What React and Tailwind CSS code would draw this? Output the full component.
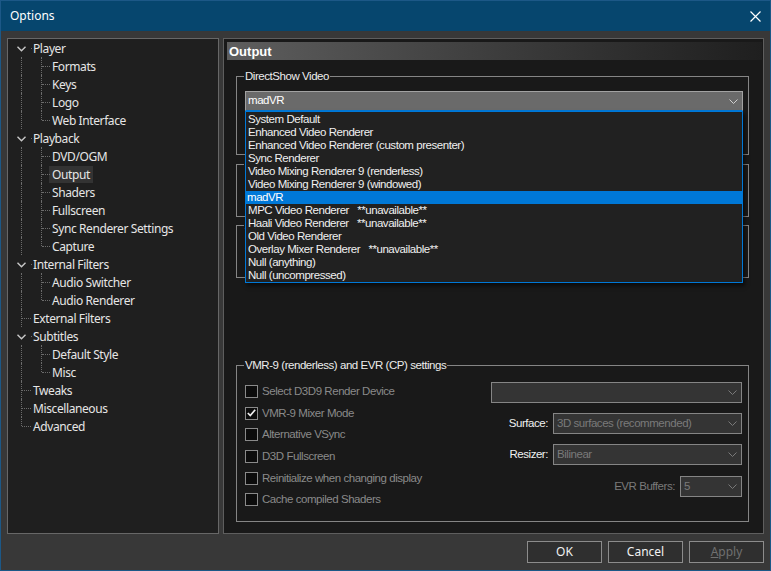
import React from 'react';

// Windows-dialog-like font stacks
const ui = "font-['Noto_Sans',sans-serif] text-[12px]";
const dlg = "font-['Liberation_Sans',Arial,sans-serif] text-[11.5px] tracking-[-0.45px]";

const treeItems = [
  { t: 'Player', l: 1, c: true },
  { t: 'Formats', l: 2 },
  { t: 'Keys', l: 2 },
  { t: 'Logo', l: 2 },
  { t: 'Web Interface', l: 2, last: true },
  { t: 'Playback', l: 1, c: true },
  { t: 'DVD/OGM', l: 2 },
  { t: 'Output', l: 2, sel: true },
  { t: 'Shaders', l: 2 },
  { t: 'Fullscreen', l: 2 },
  { t: 'Sync Renderer Settings', l: 2 },
  { t: 'Capture', l: 2, last: true },
  { t: 'Internal Filters', l: 1, c: true },
  { t: 'Audio Switcher', l: 2 },
  { t: 'Audio Renderer', l: 2, last: true },
  { t: 'External Filters', l: 1 },
  { t: 'Subtitles', l: 1, c: true },
  { t: 'Default Style', l: 2 },
  { t: 'Misc', l: 2, last: true },
  { t: 'Tweaks', l: 1 },
  { t: 'Miscellaneous', l: 1 },
  { t: 'Advanced', l: 1, lastRoot: true },
];

const renderers = [
  'System Default',
  'Enhanced Video Renderer',
  'Enhanced Video Renderer (custom presenter)',
  'Sync Renderer',
  'Video Mixing Renderer 9 (renderless)',
  'Video Mixing Renderer 9 (windowed)',
  'madVR',
  'MPC Video Renderer   **unavailable**',
  'Haali Video Renderer   **unavailable**',
  'Old Video Renderer',
  'Overlay Mixer Renderer   **unavailable**',
  'Null (anything)',
  'Null (uncompressed)',
];

const Chevron = ({ className = 'stroke-[#8a8a8a]' }) => (
  <svg width="9" height="5" viewBox="0 0 9 5" className={className} fill="none">
    <polyline points="0.5,0.5 4.5,4.5 8.5,0.5" strokeWidth="1" />
  </svg>
);

const TreeRow = ({ item }) => {
  const { t, l, c, last, lastRoot, sel } = item;
  return (
    <div className="relative h-[18px] flex items-center">
      {/* connector lines */}
      {l === 1 && !c && (
        <>
          <span className={`absolute left-[13px] top-0 border-l border-dotted border-[#6b6b6b] ${lastRoot ? 'h-[9px]' : 'h-[18px]'}`} />
          <span className="absolute left-[14px] top-[9px] w-[9px] border-t border-dotted border-[#6b6b6b]" />
        </>
      )}
      {l === 1 && c && (
        <>
          <span className="absolute left-[23px] top-[9px] w-[1px] h-[1px] bg-[#6b6b6b]" />
          <span className="absolute left-[9px] top-[7px]">
            <svg width="9" height="6" viewBox="0 0 9 6" fill="none" className="stroke-[#c8c8c8]">
              <polyline points="0.5,0.8 4.5,4.8 8.5,0.8" strokeWidth="1.4" />
            </svg>
          </span>
        </>
      )}
      {l === 2 && (
        <>
          <span className="absolute left-[13px] top-0 h-[18px] border-l border-dotted border-[#6b6b6b]" />
          <span className={`absolute left-[33px] top-0 border-l border-dotted border-[#6b6b6b] ${last ? 'h-[9px]' : 'h-[18px]'}`} />
          <span className="absolute left-[34px] top-[9px] w-[8px] border-t border-dotted border-[#6b6b6b]" />
        </>
      )}
      <span
        className={`${l === 1 ? 'ml-[22px]' : 'ml-[41px]'} ${sel ? 'bg-[#333333]' : ''} px-[3px] h-[17px] leading-[17px] tracking-[-0.4px] text-[#e6e6e6] whitespace-nowrap`}
      >
        {t}
      </span>
    </div>
  );
};

// fieldset carries no padding so the legend sits 7px in from the border
const GroupBox = ({ label, className = '', inner = '', children }) => (
  <fieldset className={`border border-[#858585] p-0 ${className}`}>
    <legend className={`${dlg} ml-[7px] px-[1px] leading-[13px] text-[#ececec]`}>{label}</legend>
    <div className={inner}>{children}</div>
  </fieldset>
);

const Check = ({ label, checked }) => (
  <div className="h-[21.6px] flex items-center">
    <span className="w-[13px] h-[13px] border border-[#8a8a8a] bg-[#0c0c0c] flex items-center justify-center">
      {checked && (
        <svg width="9" height="8" viewBox="0 0 9 8" fill="none" className="stroke-[#f0f0f0]">
          <polyline points="0.8,4 3.3,6.6 8.2,0.8" strokeWidth="1.7" />
        </svg>
      )}
    </span>
    <span className={`${dlg} ml-[4px] text-[#8a8a8a] whitespace-nowrap`}>{label}</span>
  </div>
);

const DisabledCombo = ({ value, className = '' }) => (
  <div className={`h-[21px] border border-[#858585] bg-[#343434] flex items-center justify-between pl-[3px] pr-[4px] ${className}`}>
    <span className={`${dlg} text-[#7a7a7a] whitespace-nowrap`}>{value}</span>
    <Chevron className="stroke-[#7a7a7a]" />
  </div>
);

const Button = ({ children, disabled }) => (
  <button
    className={`${ui} w-[75px] h-[22px] border border-[#8c8c8c] bg-[#2f2f2f] ${disabled ? 'text-[#707070]' : 'text-[#f2f2f2]'}`}
  >
    {children}
  </button>
);

export default function App() {
  return (
    <div className="w-[771px] h-[571px] bg-[#383838] border border-[#1c5887] flex flex-col overflow-hidden">
      {/* Title bar */}
      <div className="h-[30px] bg-[#06466e] flex items-center justify-between pl-[9px] pr-[9px] shrink-0">
        <span className={`${ui} text-white`}>Options</span>
        <svg width="11" height="11" viewBox="0 0 11 11" className="stroke-white">
          <path d="M0.5 0.5 L10.5 10.5 M10.5 0.5 L0.5 10.5" strokeWidth="1.2" />
        </svg>
      </div>

      {/* Body */}
      <div className="flex gap-[4px] pl-[6px] pt-[7px] shrink-0">
        {/* Tree */}
        <div className={`${ui} w-[212px] h-[496px] border border-[#676767] bg-[#1f1f1f] overflow-hidden`}>
          {treeItems.map((item) => (
            <TreeRow key={item.t} item={item} />
          ))}
        </div>

        {/* Page */}
        <div className="w-[541px] h-[496px] border border-[#5e5e5e] bg-[#191919] flex flex-col">
          <div className="mt-[3px] ml-[3px] mr-[1px] h-[18px] bg-linear-to-r from-[#5e5e5e] to-[#1f1f1f] flex items-center pl-[2px]">
            <span className="font-['Liberation_Sans',Arial,sans-serif] text-[13px] font-bold text-white leading-none">Output</span>
          </div>

          <GroupBox label="DirectShow Video" className="mt-[10px] ml-[12px] mr-[14px]" inner="pt-[8px] pl-[8px] pr-[5px] pb-[43px]">
            <div className="relative">
              <div className="h-[20px] bg-[#6a6a6a] border border-[#a2a2a2] border-b-[#0078d7] flex items-center justify-between pl-[2px] pr-[4px]">
                <span className={`${dlg} text-white`}>madVR</span>
                <Chevron className="stroke-[#d0d0d0]" />
              </div>
              {/* open dropdown list */}
              <div className="absolute left-0 right-0 top-[20px] z-10 border border-[#0078d7] bg-[#212121] pt-[1px] shadow-[2px_3px_4px_rgba(0,0,0,0.55)]">
                {renderers.map((r) => (
                  <div
                    key={r}
                    className={`${dlg} h-[13px] leading-[13px] whitespace-pre ${r === 'madVR' ? 'bg-[#0078d7] text-white pl-[1px]' : 'text-[#f0f0f0] pl-[2px]'}`}
                  >
                    {r}
                  </div>
                ))}
              </div>
            </div>
          </GroupBox>

          <GroupBox label="Subtitles" className="mt-[3px] ml-[12px] mr-[14px]" inner="h-[45px]" />
          <GroupBox label="Audio Renderer" className="mt-[2px] ml-[12px] mr-[14px]" inner="h-[45px]" />

          <GroupBox
            label="VMR-9 (renderless) and EVR (CP) settings"
            className="mt-[81px] ml-[12px] mr-[14px]"
            inner="pl-[8px] pr-[6px] pb-[10px]"
          >
            <div className="flex">
              <div className="flex-1 pt-[9px]">
                <Check label="Select D3D9 Render Device" />
                <Check label="VMR-9 Mixer Mode" checked />
                <Check label="Alternative VSync" />
                <Check label="D3D Fullscreen" />
                <Check label="Reinitialize when changing display" />
                <Check label="Cache compiled Shaders" />
              </div>
              <div className="w-[251px] pt-[10px] flex flex-col">
                <DisabledCombo value="" />
                <div className="mt-[10px] flex items-center justify-end gap-[5px]">
                  <span className={`${dlg} text-[#f0f0f0]`}>Surface:</span>
                  <DisabledCombo value="3D surfaces (recommended)" className="w-[189px]" />
                </div>
                <div className="mt-[10px] flex items-center justify-end gap-[5px]">
                  <span className={`${dlg} text-[#f0f0f0]`}>Resizer:</span>
                  <DisabledCombo value="Bilinear" className="w-[189px]" />
                </div>
                <div className="mt-[11px] flex items-center justify-end gap-[5px]">
                  <span className={`${dlg} text-[#7a7a7a]`}>EVR Buffers:</span>
                  <DisabledCombo value="5" className="w-[62px]" />
                </div>
              </div>
            </div>
          </GroupBox>
        </div>
      </div>

      {/* Footer buttons */}
      <div className="flex justify-end gap-[6px] pr-[6px] pt-[7px]">
        <Button>OK</Button>
        <Button>Cancel</Button>
        <Button disabled>
          <span className="underline">A</span>pply
        </Button>
      </div>
    </div>
  );
}
